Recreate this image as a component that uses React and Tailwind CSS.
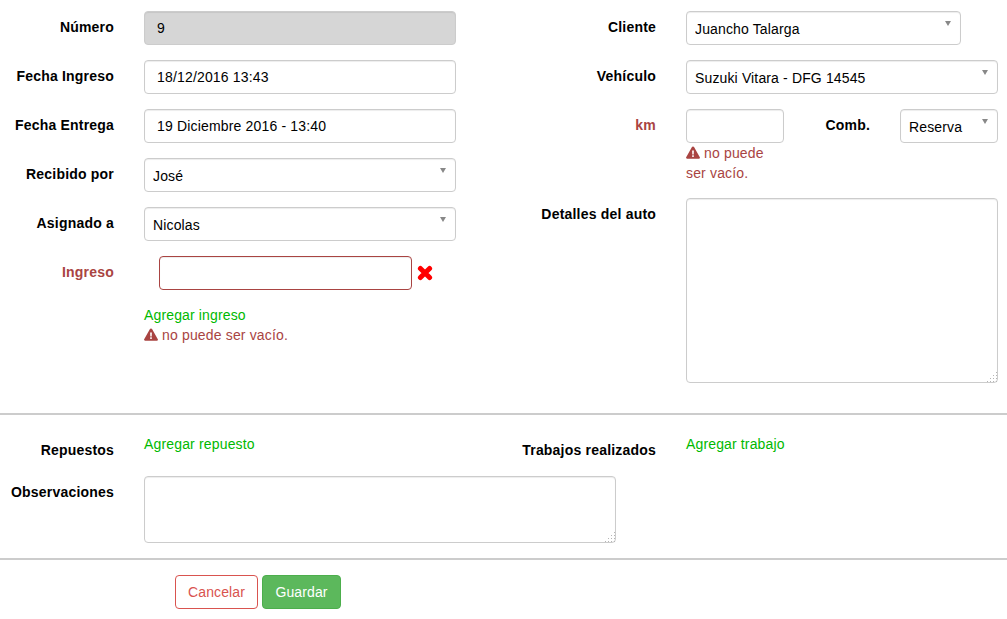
import React from "react";

const shadow = "shadow-[inset_0_1px_1px_rgba(0,0,0,0.075)]";
const inputCls = "block h-[34px] w-full rounded border border-[#ccc] bg-white px-3 text-sm tracking-[0.17px] text-black shadow-[inset_0_1px_1px_rgba(0,0,0,0.075)] outline-none";

function Label({ children, error, className = "" }) {
  return (
    <div className={`w-[114px] shrink-0 pt-[6px] text-right text-sm leading-5 font-bold tracking-[0.2px] whitespace-nowrap ${error ? "text-[#a94442]" : "text-black"} ${className}`}>
      {children}
    </div>
  );
}

function RLabel({ children, error, className = "" }) {
  return (
    <div className={`w-[152px] shrink-0 pt-[6px] text-right text-sm leading-5 font-bold tracking-[0.2px] whitespace-nowrap ${error ? "text-[#a94442]" : "text-black"} ${className}`}>
      {children}
    </div>
  );
}

function Select({ value, className = "" }) {
  return (
    <div className={`relative h-[34px] rounded border border-[#ccc] bg-white pt-[7px] pl-2 text-sm leading-5 tracking-[0.14px] text-black shadow-[inset_0_1px_1px_rgba(0,0,0,0.075)] ${className}`}>
      <span className="block truncate">{value}</span>
      <span className="absolute top-[9px] right-[9px] h-0 w-0 border-x-[3.5px] border-t-[5px] border-x-transparent border-t-[#888]" />
    </div>
  );
}

function Warn() {
  return (
    <svg viewBox="0 0 16 14" className="mr-[4px] inline-block h-[13px] w-[14px] align-[-1px]">
      <path fill="#a94442" fillRule="evenodd" d="M8 0c.6 0 1 .3 1.2.7l6.6 11.7c.4.7-.1 1.6-1 1.6H1.2c-.9 0-1.4-.9-1-1.6L6.8.7C7 .3 7.4 0 8 0zM7 4.8l.2 4.4h1.6L9 4.8H7zM7.1 10.2v2h1.8v-2H7.1z" />
    </svg>
  );
}

function Grip() {
  const dots = [[9,0],[9,3],[6,3],[9,6],[6,6],[3,6],[9,9],[6,9],[3,9],[0,9]];
  return (
    <svg viewBox="0 0 10 10" className="pointer-events-none absolute right-[1px] bottom-[1px] h-[10px] w-[10px]">
      {dots.map(([x, y]) => <rect key={`${x}-${y}`} x={x} y={y} width="1" height="1" fill="#b5b5b5" />)}
    </svg>
  );
}

function Area({ className = "" }) {
  return (
    <div className={`relative ${className}`}>
      <textarea readOnly className={`block h-full w-full resize-none rounded border border-[#ccc] bg-white outline-none ${shadow}`} />
      <Grip />
    </div>
  );
}

function Row({ children, className = "" }) {
  return <div className={`flex ${className}`}>{children}</div>;
}

export default function App() {
  return (
    <div className="min-h-[619px] bg-white text-sm leading-5 text-black" style={{ fontFamily: '"Liberation Sans", Arial, sans-serif' }}>
      <div className="flex h-[413px]">
        <div className="w-[504px] shrink-0 pt-[11px]">
          <div className="flex flex-col gap-[15px]">
            <Row className="gap-[30px]">
              <Label>Número</Label>
              <input readOnly value="9" className="block h-[34px] w-[312px] rounded border border-[#ccc] bg-[#d6d6d6] px-3 text-sm text-black shadow-[inset_0_1px_1px_rgba(0,0,0,0.075)] outline-none" />
            </Row>
            <Row className="gap-[30px]">
              <Label>Fecha Ingreso</Label>
              <div className="w-[312px]"><input readOnly value="18/12/2016 13:43" className={inputCls} /></div>
            </Row>
            <Row className="gap-[30px]">
              <Label>Fecha Entrega</Label>
              <div className="w-[312px]"><input readOnly value="19 Diciembre 2016 - 13:40" className={inputCls} /></div>
            </Row>
            <Row className="gap-[30px]">
              <Label>Recibido por</Label>
              <Select value="José" className="w-[312px]" />
            </Row>
            <Row className="gap-[30px]">
              <Label>Asignado a</Label>
              <Select value="Nicolas" className="w-[312px]" />
            </Row>
            <Row className="gap-[30px]">
              <Label error>Ingreso</Label>
              <div className="w-[312px]">
                <div className="flex items-center pl-[15px]">
                  <input readOnly value="" className="block h-[34px] w-[253px] rounded border border-[#a94442] bg-white px-3 text-sm shadow-[inset_0_1px_1px_rgba(0,0,0,0.075)] outline-none" />
                  <svg viewBox="0 0 16 16" className="ml-[5px] h-[16px] w-[16px]">
                    <path d="M3.4 3.4L12.6 12.6M12.6 3.4L3.4 12.6" stroke="#ff0000" strokeWidth="5" strokeLinecap="round" fill="none" />
                  </svg>
                </div>
                <div className="mt-[15px] tracking-[0.14px] text-[#00b900]">Agregar ingreso</div>
                <div className="tracking-[0.16px] text-[#a94442]"><Warn />no puede ser vacío.</div>
              </div>
            </Row>
          </div>
        </div>
        <div className="flex-1 pt-[11px]">
          <div className="flex flex-col">
            <Row className="gap-[30px]">
              <RLabel>Cliente</RLabel>
              <Select value="Juancho Talarga" className="w-[275px]" />
            </Row>
            <Row className="mt-[15px] gap-[30px]">
              <RLabel>Vehículo</RLabel>
              <Select value="Suzuki Vitara - DFG 14545" className="w-[312px]" />
            </Row>
            <Row className="mt-[15px]">
              <RLabel error className="mr-[30px]">km</RLabel>
              <div className="w-[98px]">
                <input readOnly value="" className={inputCls} />
                <div className="tracking-[0.16px] text-[#a94442]"><Warn />no puede ser vacío.</div>
              </div>
              <div className="mr-[30px] w-[86px] pt-[6px] text-right font-bold tracking-[0.2px]">Comb.</div>
              <Select value="Reserva" className="w-[98px]" />
            </Row>
            <Row className="mt-[15px] gap-[30px]">
              <RLabel>Detalles del auto</RLabel>
              <Area className="h-[185px] w-[312px]" />
            </Row>
          </div>
        </div>
      </div>

      <div className="h-[2px] bg-[#ccc]" />

      <div className="h-[143px] pt-[19px]">
        <div className="flex">
          <div className="flex w-[504px] shrink-0 gap-[30px]">
            <Label>Repuestos</Label>
            <div className="tracking-[0.16px] text-[#00b900]">Agregar repuesto</div>
          </div>
          <div className="flex flex-1 gap-[30px]">
            <RLabel>Trabajos realizados</RLabel>
            <div className="tracking-[0.14px] text-[#00b900]">Agregar trabajo</div>
          </div>
        </div>
        <div className="mt-[16px] flex gap-[30px]">
          <Label className="pt-[5px]">Observaciones</Label>
          <Area className="h-[67px] w-[472px]" />
        </div>
      </div>

      <div className="h-[2px] bg-[#ccc]" />

      <div className="flex gap-[4px] pt-[15px] pl-[175px]">
        <button className="h-[34px] w-[83px] rounded border border-[#d9534f] bg-white text-sm tracking-[0.1px] text-[#d9534f]">Cancelar</button>
        <button className="h-[34px] w-[79px] rounded border border-[#4cae4c] bg-[#5cb85c] text-sm tracking-[0.1px] text-white">Guardar</button>
      </div>
    </div>
  );
}
